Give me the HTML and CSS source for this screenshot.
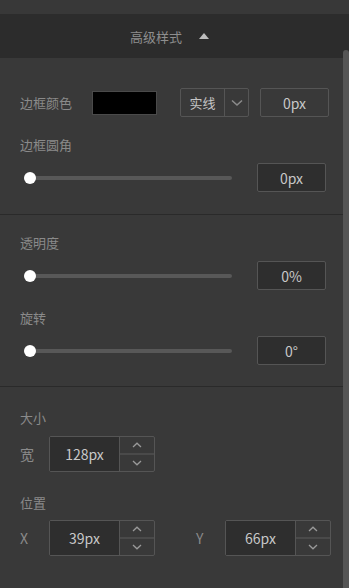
FILE: index.html
```html
<!DOCTYPE html>
<html lang="zh-CN">
<head>
    <meta charset="UTF-8">
    <meta name="viewport" content="width=device-width, initial-scale=1.0">
    <title>高级样式</title>
    <link rel="stylesheet" href="styles.css">
</head>
<body>
    <div class="panel">
        <div class="panel-top"></div>
        <div class="panel-header">
            <span>高级样式</span>
            <span class="caret"></span>
        </div>

        <div class="section section-border">
            <div class="row">
                <span class="label">边框颜色</span>
                <span class="swatch"></span>
                <div class="select">
                    <span class="select-text">实线</span>
                    <span class="select-arrow">
                        <svg width="12" height="8" viewBox="0 0 12 8"><path d="M1 1.5 L6 6 L11 1.5" fill="none" stroke="#8a8a8a" stroke-width="1.6"/></svg>
                    </span>
                </div>
                <div class="value-box value-wide">0px</div>
            </div>
            <div class="label label-block">边框圆角</div>
            <div class="slider-row">
                <div class="slider"><span class="thumb"></span></div>
                <div class="value-box">0px</div>
            </div>
        </div>

        <div class="section section-alpha">
            <div class="label label-block first">透明度</div>
            <div class="slider-row">
                <div class="slider"><span class="thumb"></span></div>
                <div class="value-box">0%</div>
            </div>
            <div class="label label-block">旋转</div>
            <div class="slider-row">
                <div class="slider"><span class="thumb"></span></div>
                <div class="value-box">0°</div>
            </div>
        </div>

        <div class="section section-size">
            <div class="label label-block first">大小</div>
            <div class="spin-row">
                <span class="label spin-label">宽</span>
                <div class="spinner">
                    <div class="spin-value">128px</div>
                    <div class="spin-btns">
                        <span class="spin-btn"><svg width="10" height="6" viewBox="0 0 10 6"><path d="M1 5 L5 1.2 L9 5" fill="none" stroke="#9a9a9a" stroke-width="1.3"/></svg></span>
                        <span class="spin-btn"><svg width="10" height="6" viewBox="0 0 10 6"><path d="M1 1 L5 4.8 L9 1" fill="none" stroke="#9a9a9a" stroke-width="1.3"/></svg></span>
                    </div>
                </div>
            </div>
            <div class="label label-block label-pos">位置</div>
            <div class="spin-row">
                <span class="label spin-label">X</span>
                <div class="spinner">
                    <div class="spin-value">39px</div>
                    <div class="spin-btns">
                        <span class="spin-btn"><svg width="10" height="6" viewBox="0 0 10 6"><path d="M1 5 L5 1.2 L9 5" fill="none" stroke="#9a9a9a" stroke-width="1.3"/></svg></span>
                        <span class="spin-btn"><svg width="10" height="6" viewBox="0 0 10 6"><path d="M1 1 L5 4.8 L9 1" fill="none" stroke="#9a9a9a" stroke-width="1.3"/></svg></span>
                    </div>
                </div>
                <span class="label spin-label spin-label-y">Y</span>
                <div class="spinner">
                    <div class="spin-value">66px</div>
                    <div class="spin-btns">
                        <span class="spin-btn"><svg width="10" height="6" viewBox="0 0 10 6"><path d="M1 5 L5 1.2 L9 5" fill="none" stroke="#9a9a9a" stroke-width="1.3"/></svg></span>
                        <span class="spin-btn"><svg width="10" height="6" viewBox="0 0 10 6"><path d="M1 1 L5 4.8 L9 1" fill="none" stroke="#9a9a9a" stroke-width="1.3"/></svg></span>
                    </div>
                </div>
            </div>
        </div>

        <div class="scrollbar"></div>
    </div>
</body>
</html>
```

FILE: styles.css
```css
html, body {
    margin: 0;
    padding: 0;
    background: #393939;
}
body {
    font-family: "Noto Sans CJK SC", "Noto Sans", sans-serif;
    width: 349px;
    height: 588px;
    overflow: hidden;
}
.panel {
    position: relative;
    height: 588px;
    background: #393939;
}
.panel-top {
    height: 14px;
    background: #383838;
}
.panel-header {
    height: 44px;
    background: #2c2c2c;
    color: #8e8e8e;
    font-size: 13px;
    display: flex;
    align-items: center;
    justify-content: center;
    padding-right: 10px;
    gap: 17px;
}
.caret {
    width: 0;
    height: 0;
    border-left: 5px solid transparent;
    border-right: 5px solid transparent;
    border-bottom: 6px solid #bdbdbd;
}
.section {
    width: 343px;
    box-sizing: border-box;
    padding: 0 0 0 20px;
    border-bottom: 1px solid #2a2a2a;
}
.section-border {
    padding-top: 30px;
    padding-bottom: 22px;
}
.section-alpha {
    padding-top: 19px;
    padding-bottom: 21px;
}
.section-size {
    padding-top: 22px;
    border-bottom: none;
}
.label {
    color: #8a8a8a;
    font-size: 13px;
    line-height: 18px;
}
.label-block {
    margin-top: 19px;
}
.label-block.first {
    margin-top: 0;
}
.label-block.label-pos {
    margin-top: 23px;
}
.row {
    display: flex;
    align-items: center;
    height: 29px;
}
.swatch {
    width: 63px;
    height: 22px;
    background: #000;
    border: 1px solid #4a4a4a;
    margin-left: 20px;
}
.select {
    display: flex;
    width: 67px;
    height: 27px;
    border: 1px solid #555;
    border-radius: 2px;
    margin-left: 23px;
}
.select-text {
    width: 43px;
    border-right: 1px solid #555;
    color: #c4c4c4;
    font-size: 13px;
    display: flex;
    align-items: center;
    justify-content: center;
}
.select-arrow {
    flex: 1;
    display: flex;
    align-items: center;
    justify-content: center;
}
.value-box {
    width: 67px;
    height: 27px;
    border: 1px solid #555;
    border-radius: 2px;
    background: #2e2e2e;
    color: #c8c8c8;
    font-size: 14px;
    display: flex;
    align-items: center;
    justify-content: center;
    box-sizing: content-box;
}
.row .value-box {
    margin-left: 11px;
    background: #393939;
}
.slider-row {
    display: flex;
    align-items: center;
    margin-top: 9px;
    height: 29px;
}
.slider {
    position: relative;
    width: 208px;
    height: 4px;
    margin-left: 4px;
    border-radius: 2px;
    background: #585858;
}
.thumb {
    position: absolute;
    left: 0;
    top: -4px;
    width: 12px;
    height: 12px;
    border-radius: 50%;
    background: #fff;
}
.slider-row .value-box {
    margin-left: 25px;
}
.spin-row {
    display: flex;
    align-items: center;
    margin-top: 9px;
    height: 35px;
}
.label-pos + .spin-row {
    margin-top: 8px;
}
.spin-label {
    width: 29px;
    font-size: 14px;
}
.spin-label-y {
    margin-left: 41px;
}
.spinner {
    display: flex;
    width: 104px;
    height: 34px;
    border: 1px solid #555;
    border-radius: 2px;
}
.spin-value {
    width: 69px;
    background: #2e2e2e;
    border-right: 1px solid #555;
    color: #c8c8c8;
    font-size: 14px;
    display: flex;
    align-items: center;
    justify-content: center;
}
.spin-btns {
    flex: 1;
    display: flex;
    flex-direction: column;
}
.spin-btn {
    flex: 1;
    display: flex;
    align-items: center;
    justify-content: center;
}
.spin-btn + .spin-btn {
    border-top: 2px solid #4a4a4a;
}
.scrollbar {
    position: absolute;
    right: 0;
    top: 50px;
    bottom: 0;
    width: 6px;
    border-radius: 3px 3px 0 0;
    background: #555;
}
```
